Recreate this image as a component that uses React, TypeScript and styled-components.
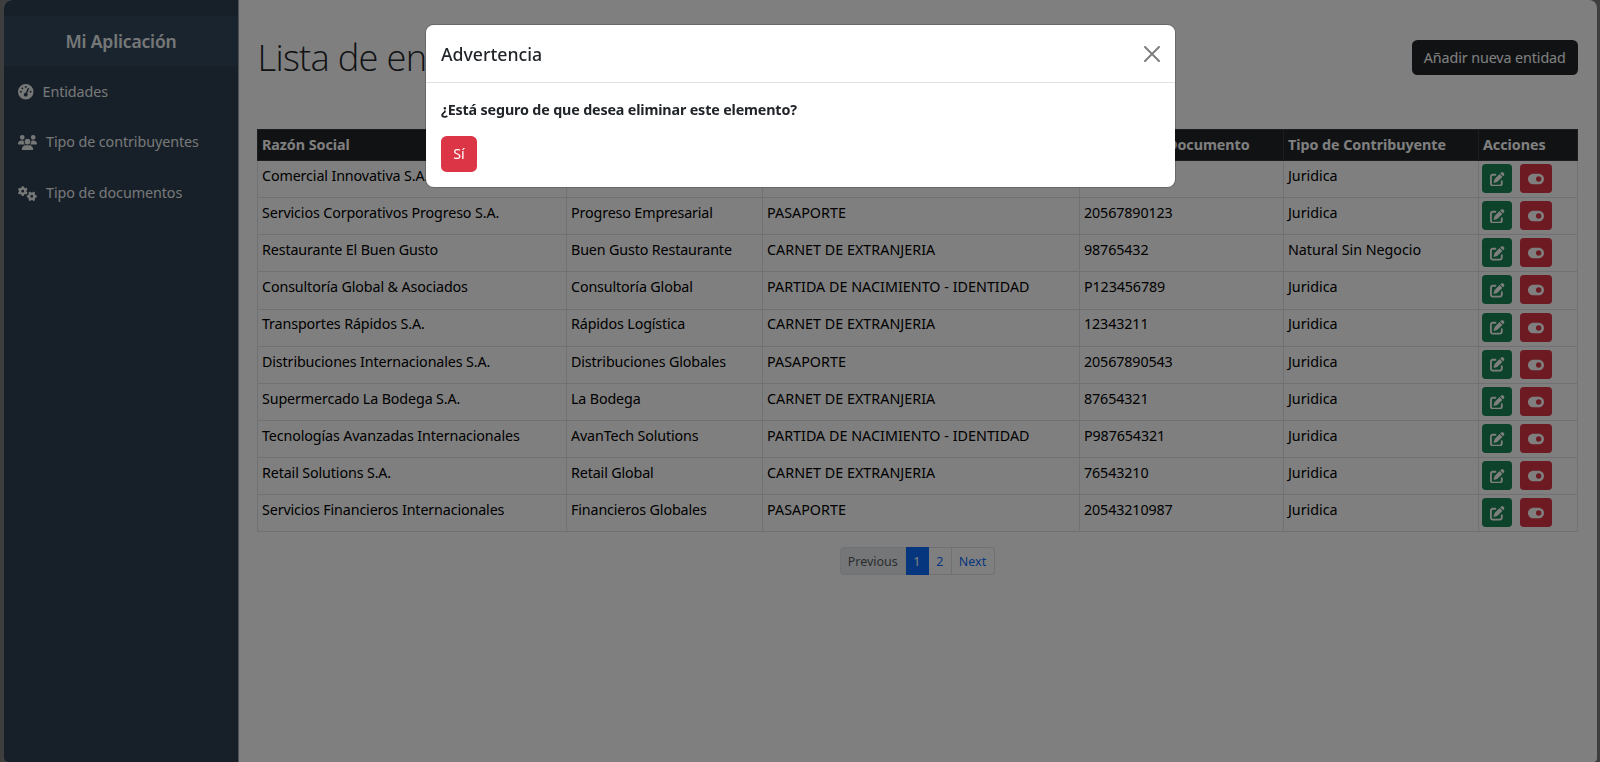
import React from 'react';
import styled, { createGlobalStyle } from 'styled-components';
import { FaGaugeHigh, FaUsers, FaGears, FaPenToSquare, FaToggleOn } from 'react-icons/fa6';

const GlobalStyle = createGlobalStyle`
  *, *::before, *::after { box-sizing: border-box; }
  body {
    margin: 0;
    background: #7c7c7c;
    color: #212529;
    font-family: 'Noto Sans', 'Open Sans', sans-serif;
    font-size: 14.3px;
    line-height: 22.5px;
    overflow: hidden;
  }
  button { font: inherit; border: 0; margin: 0; }
`;

const Page = styled.div`
  height: 762px;
  padding: 0 3.5px 0 4px;
  overflow: hidden;
`;

const Shell = styled.div`
  display: flex;
  height: 762px;
  border-radius: 8px 8px 4px 4px;
  overflow: hidden;
  background: #fff;
`;

const Sidebar = styled.aside`
  flex: 0 0 235px;
  padding-top: 16px;
  border-right: 1px solid #9aa1a8;
  background: #2e3e50;
  color: #ecf0f1;
`;

const Brand = styled.h2`
  height: 50px;
  margin: 0;
  line-height: 50px;
  text-align: center;
  font-size: 17.5px;
  font-weight: 600;
  letter-spacing: -0.15px;
  background: #34495e;
`;

const NavItem = styled.a`
  display: flex;
  align-items: center;
  gap: 9px;
  height: 50.7px;
  padding: 1px 0 0 14px;
  letter-spacing: -0.07px;
`;

const Main = styled.main`
  flex: 1;
  padding: 0 18.5px 0 18.5px;
`;

const TopBar = styled.header`
  display: flex;
  justify-content: space-between;
  align-items: flex-start;
  height: 129px;
  padding-top: 40px;
`;

const Heading = styled.h1`
  margin: -6px 0 0;
  font-family: 'Open Sans', 'Noto Sans', sans-serif;
  font-size: 36.3px;
  font-weight: 300;
  line-height: 46px;
  letter-spacing: -0.72px;
`;

const AddButton = styled.button`
  width: 166.5px;
  height: 35px;
  padding: 2px 0 0;
  border-radius: 5.5px;
  background: #212529;
  color: #fff;
  letter-spacing: -0.1px;
  white-space: nowrap;
`;

const Table = styled.table`
  width: 1320px;
  margin-left: -0.5px;
  table-layout: fixed;
  border-collapse: collapse;
`;

const HeadCell = styled.th`
  height: 31px;
  padding: 0 4px;
  border: 1px solid #373b3e;
  background: #212529;
  color: #fff;
  font-weight: 700;
  letter-spacing: -0.04px;
  text-align: left;
  white-space: nowrap;
`;

const Cell = styled.td<{ $tracking?: number }>`
  height: 37.15px;
  padding: 3.8px 4px 0;
  border: 1px solid #dee2e6;
  color: #000;
  letter-spacing: ${(p) => p.$tracking ?? 0}px;
  vertical-align: top;
  white-space: nowrap;
`;

const Actions = styled.div`
  display: flex;
  gap: 7.5px;
  margin: -0.8px 0 0 -0.7px;
`;

const ActionButton = styled.button<{ $danger?: boolean }>`
  display: flex;
  align-items: center;
  justify-content: center;
  width: ${(p) => (p.$danger ? 32 : 30)}px;
  height: 29px;
  padding: 1px 0 0;
  border-radius: 3.75px;
  color: #fff;
  background: ${(p) => (p.$danger ? '#dc3545' : '#198754')};
`;

const Pagination = styled.nav`
  display: flex;
  justify-content: center;
  margin: 14.5px 0 0 -1px;
  font-size: 12.5px;
`;

const PageLink = styled.a<{ $width: number; $state?: 'active' | 'disabled' }>`
  width: ${(p) => p.$width}px;
  height: 28.5px;
  line-height: 27px;
  text-align: center;
  border: 1px solid ${(p) => (p.$state === 'active' ? '#0d6efd' : '#dee2e6')};
  border-left-width: ${(p) => (p.$state === 'disabled' ? 1 : 0)}px;
  background: ${(p) => (p.$state === 'active' ? '#0d6efd' : p.$state === 'disabled' ? '#e9ecef' : '#fff')};
  color: ${(p) => (p.$state === 'active' ? '#fff' : p.$state === 'disabled' ? 'rgba(33,37,41,.75)' : '#0d6efd')};
  &:first-child { border-radius: 4px 0 0 4px; }
  &:last-child { border-radius: 0 4px 4px 0; }
`;

const Backdrop = styled.div`
  position: fixed;
  inset: 0;
  display: flex;
  justify-content: center;
  align-items: flex-start;
  padding-top: 25px;
  background: rgba(0, 0, 0, 0.5);
`;

const Dialog = styled.section`
  width: 749px;
  height: 161.5px;
  border-radius: 7.5px;
  background: #fff;
  box-shadow: 0 0 0 1px rgba(0, 0, 0, 0.175);
`;

const DialogHeader = styled.header`
  display: flex;
  align-items: center;
  justify-content: space-between;
  height: 58px;
  padding: 0 14.5px 0 15.5px;
  border-bottom: 1px solid #dee2e6;
`;

const DialogTitle = styled.h5`
  margin: 2px 0 0;
  font-size: 17.7px;
  font-weight: 550;
`;

const CloseIcon = styled.svg`
  width: 16px;
  height: 16px;
  opacity: 0.5;
`;

const DialogBody = styled.div`
  padding: 16px 15px 15px 15.5px;
`;

const Question = styled.p`
  margin: 0 0 14px;
  font-weight: 700;
  letter-spacing: -0.15px;
`;

const ConfirmButton = styled.button`
  width: 36px;
  height: 36px;
  padding: 1px 0 0;
  border-radius: 5.6px;
  background: #dc3545;
  color: #fff;
`;

const columns: [string, number, number][] = [
  ['Razón Social', 309, -0.13],
  ['Nombre Comercial', 196, -0.14],
  ['Tipo de Documento', 317, 0.03],
  ['Número de Documento', 204, -0.12],
  ['Tipo de Contribuyente', 195, -0.03],
  ['Acciones', 99, 0],
];

const entities = [
  ['Comercial Innovativa S.A.', 'Innovativa', 'PASAPORTE', '20123456789', 'Juridica'],
  ['Servicios Corporativos Progreso S.A.', 'Progreso Empresarial', 'PASAPORTE', '20567890123', 'Juridica'],
  ['Restaurante El Buen Gusto', 'Buen Gusto Restaurante', 'CARNET DE EXTRANJERIA', '98765432', 'Natural Sin Negocio'],
  ['Consultoría Global & Asociados', 'Consultoría Global', 'PARTIDA DE NACIMIENTO - IDENTIDAD', 'P123456789', 'Juridica'],
  ['Transportes Rápidos S.A.', 'Rápidos Logística', 'CARNET DE EXTRANJERIA', '12343211', 'Juridica'],
  ['Distribuciones Internacionales S.A.', 'Distribuciones Globales', 'PASAPORTE', '20567890543', 'Juridica'],
  ['Supermercado La Bodega S.A.', 'La Bodega', 'CARNET DE EXTRANJERIA', '87654321', 'Juridica'],
  ['Tecnologías Avanzadas Internacionales', 'AvanTech Solutions', 'PARTIDA DE NACIMIENTO - IDENTIDAD', 'P987654321', 'Juridica'],
  ['Retail Solutions S.A.', 'Retail Global', 'CARNET DE EXTRANJERIA', '76543210', 'Juridica'],
  ['Servicios Financieros Internacionales', 'Financieros Globales', 'PASAPORTE', '20543210987', 'Juridica'],
];

export default function App() {
  return (
    <>
      <GlobalStyle />
      <Page>
        <Shell>
          <Sidebar>
            <Brand>Mi Aplicación</Brand>
            <NavItem><FaGaugeHigh size={15.5} />Entidades</NavItem>
            <NavItem><FaUsers size={19} />Tipo de contribuyentes</NavItem>
            <NavItem><FaGears size={19} />Tipo de documentos</NavItem>
          </Sidebar>
          <Main>
            <TopBar>
              <Heading>Lista de entidades</Heading>
              <AddButton>Añadir nueva entidad</AddButton>
            </TopBar>
            <Table>
              <colgroup>
                {columns.map(([name, width]) => <col key={name} width={width} />)}
              </colgroup>
              <thead>
                <tr>{columns.map(([name]) => <HeadCell key={name}>{name}</HeadCell>)}</tr>
              </thead>
              <tbody>
                {entities.map((row) => (
                  <tr key={row[0]}>
                    {row.map((value, i) => <Cell key={i} $tracking={columns[i][2]}>{value}</Cell>)}
                    <Cell>
                      <Actions>
                        <ActionButton aria-label="Editar"><FaPenToSquare size={14.5} /></ActionButton>
                        <ActionButton $danger aria-label="Eliminar"><FaToggleOn size={16} /></ActionButton>
                      </Actions>
                    </Cell>
                  </tr>
                ))}
              </tbody>
            </Table>
            <Pagination>
              <PageLink $width={65.5} $state="disabled">Previous</PageLink>
              <PageLink $width={23.5} $state="active">1</PageLink>
              <PageLink $width={22.5}>2</PageLink>
              <PageLink $width={43}>Next</PageLink>
            </Pagination>
          </Main>
        </Shell>
      </Page>
      <Backdrop>
        <Dialog role="dialog">
          <DialogHeader>
            <DialogTitle>Advertencia</DialogTitle>
            <CloseIcon viewBox="0 0 16 16">
              <path d="M1 1 15 15M15 1 1 15" stroke="#000" strokeWidth="2" strokeLinecap="round" />
            </CloseIcon>
          </DialogHeader>
          <DialogBody>
            <Question>¿Está seguro de que desea eliminar este elemento?</Question>
            <ConfirmButton>Sí</ConfirmButton>
          </DialogBody>
        </Dialog>
      </Backdrop>
    </>
  );
}
